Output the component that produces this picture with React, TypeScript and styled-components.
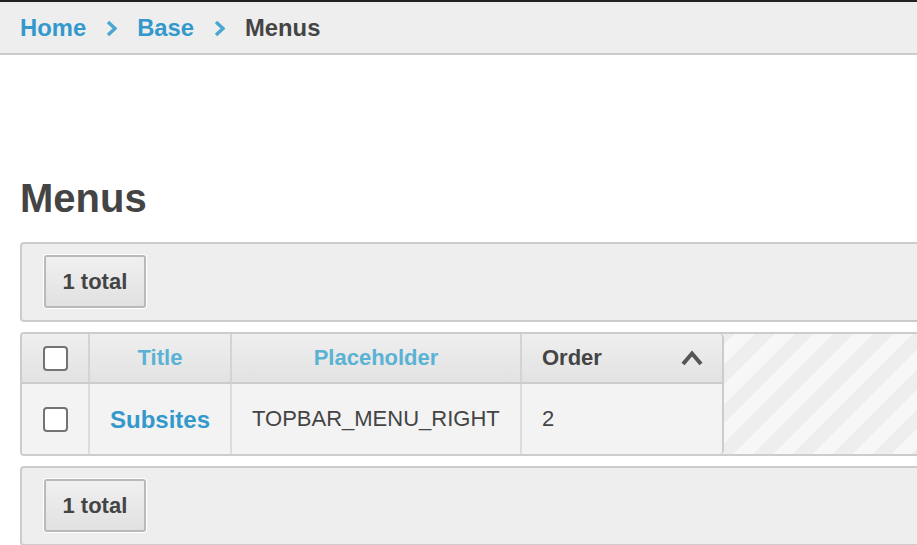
import React from "react";
import styled, { createGlobalStyle } from "styled-components";

const GlobalStyle = createGlobalStyle`
  html, body {
    margin: 0;
    padding: 0;
    overflow: hidden;
    background: #ffffff;
    font-family: "Liberation Sans", Arial, Helvetica, sans-serif;
    color: #444444;
  }
  * { box-sizing: border-box; }
`;

const Page = styled.div`
  border-top: 2px solid #222222;
  width: 100%;
`;

const Breadcrumb = styled.nav`
  display: flex;
  align-items: center;
  gap: 20px;
  height: 53px;
  padding: 1px 0 0 20px;
  background: #eeeeee;
  border-bottom: 2px solid #cccccc;
  font-size: 23.8px;
  font-weight: 700;
  line-height: 1;
`;

const Crumb = styled.a<{ $current?: boolean }>`
  color: ${(p) => (p.$current ? "#444444" : "#3399cc")};
  text-decoration: none;
`;

const Chevron = styled.svg`
  display: block;
  width: 11px;
  height: 17px;
  flex: none;
`;

const Content = styled.main`
  padding: 0 0 0 20px;
`;

const Heading = styled.h1`
  margin: 123px 0 24px 0;
  font-size: 40px;
  line-height: 1;
  font-weight: 700;
  color: #444444;
`;

const Panel = styled.div<{ $gap?: number }>`
  margin-right: -40px;
  margin-top: ${(p) => p.$gap ?? 0}px;
  background: #eeeeee;
  border: 2px solid #cccccc;
  border-radius: 4px;
  padding: 11px 0 12px 22px;
`;

const TotalButton = styled.button`
  display: inline-flex;
  align-items: center;
  height: 53px;
  padding: 1px 16.5px 0 16.5px;
  border: 2px solid #b9b9b9;
  border-radius: 3px;
  background: linear-gradient(#f0f0f0, #e1e1e1);
  box-shadow: 0 0 0 1px #ffffff;
  font-family: inherit;
  font-size: 22px;
  font-weight: 700;
  color: #444444;
  cursor: pointer;
`;

const TableWrap = styled.div`
  margin-top: 10px;
  margin-right: -40px;
  display: flex;
  border: 2px solid #cccccc;
  border-radius: 4px;
  overflow: hidden;
  background: repeating-linear-gradient(
    135deg,
    #f7f7f7 0px,
    #f7f7f7 14px,
    #eeeeee 14px,
    #eeeeee 28px
  );
`;

const Grid = styled.div`
  flex: none;
  display: grid;
  grid-template-columns: 68px 142px 290px 202px;
  grid-template-rows: 50px 70px;
`;

const HeadCell = styled.div<{ $align?: "center" | "left"; $last?: boolean }>`
  display: flex;
  align-items: center;
  justify-content: ${(p) => (p.$align === "left" ? "space-between" : "center")};
  padding: ${(p) => (p.$align === "left" ? "0 19px 0 20px" : "0")};
  background: linear-gradient(#efefef, #e2e2e2);
  border-right: 2px solid ${(p) => (p.$last ? "#cccccc" : "#d3d3d3")};
  border-bottom: 2px solid #cccccc;
  border-top-right-radius: ${(p) => (p.$last ? "4px" : "0")};
  font-size: 22px;
  font-weight: 700;
  line-height: 1;
`;

const HeadLink = styled.a<{ $active?: boolean }>`
  color: ${(p) => (p.$active ? "#444444" : "#5ab2d4")};
  text-decoration: none;
`;

const BodyCell = styled.div<{ $align?: "center" | "left"; $last?: boolean }>`
  display: flex;
  align-items: center;
  justify-content: ${(p) => (p.$align === "left" ? "flex-start" : "center")};
  padding: ${(p) => (p.$align === "left" ? "0 0 0 20px" : "0")};
  background: #f3f3f3;
  border-right: 2px solid ${(p) => (p.$last ? "#cccccc" : "#dcdcdc")};
  border-bottom-right-radius: ${(p) => (p.$last ? "4px" : "0")};
  font-size: 22px;
  line-height: 1;
  color: #444444;
`;

const RowLink = styled.a`
  color: #3399cc;
  font-size: 24px;
  font-weight: 700;
  text-decoration: none;
  padding-top: 2px;
`;

const Check = styled.input`
  appearance: none;
  -webkit-appearance: none;
  margin: 0;
  width: 25px;
  height: 25px;
  border: 2px solid #737373;
  border-radius: 4px;
  background: #ffffff;
  cursor: pointer;
`;

const SortIcon = styled.svg`
  display: block;
  width: 22px;
  height: 18px;
  flex: none;
`;

const ChevronIcon = () => (
  <Chevron viewBox="0 0 11 17">
    <polyline
      points="2,2 9,8.5 2,15"
      fill="none"
      stroke="#4aa7d1"
      strokeWidth="3.4"
    />
  </Chevron>
);

const Toolbar = ({ gap }: { gap?: number }) => (
  <Panel $gap={gap}>
    <TotalButton type="button">1 total</TotalButton>
  </Panel>
);

export default function App() {
  return (
    <Page>
      <GlobalStyle />
      <Breadcrumb>
        <Crumb href="#">Home</Crumb>
        <ChevronIcon />
        <Crumb href="#">Base</Crumb>
        <ChevronIcon />
        <Crumb $current>Menus</Crumb>
      </Breadcrumb>
      <Content>
        <Heading>Menus</Heading>
        <Toolbar />
        <TableWrap>
          <Grid>
            <HeadCell>
              <Check type="checkbox" aria-label="Select all" />
            </HeadCell>
            <HeadCell>
              <HeadLink href="#">Title</HeadLink>
            </HeadCell>
            <HeadCell>
              <HeadLink href="#">Placeholder</HeadLink>
            </HeadCell>
            <HeadCell $align="left" $last>
              <HeadLink href="#" $active>
                Order
              </HeadLink>
              <SortIcon viewBox="0 0 22 18">
                <polyline
                  points="2,15 11,4.5 20,15"
                  fill="none"
                  stroke="#555555"
                  strokeWidth="4"
                />
              </SortIcon>
            </HeadCell>
            <BodyCell>
              <Check type="checkbox" aria-label="Select row" />
            </BodyCell>
            <BodyCell>
              <RowLink href="#">Subsites</RowLink>
            </BodyCell>
            <BodyCell $align="left">TOPBAR_MENU_RIGHT</BodyCell>
            <BodyCell $align="left" $last>
              2
            </BodyCell>
          </Grid>
        </TableWrap>
        <Toolbar gap={10} />
      </Content>
    </Page>
  );
}
